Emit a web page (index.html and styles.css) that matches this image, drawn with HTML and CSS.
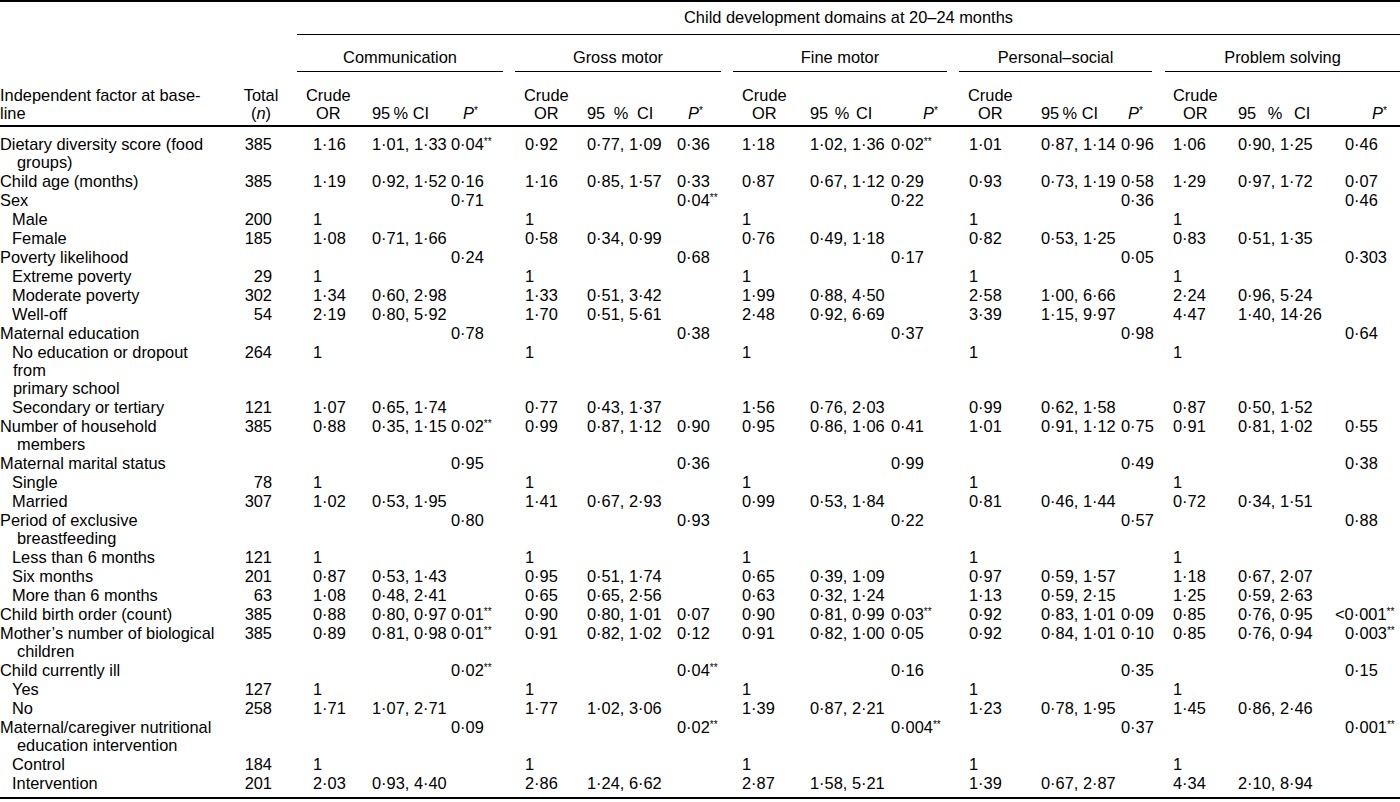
FILE: index.html
```html
<!DOCTYPE html>
<html lang="en">
<head>
<meta charset="utf-8">
<title>Child development domains at 20–24 months</title>
<link rel="stylesheet" href="styles.css">
</head>
<body>
<table class="t">
<colgroup>
<col class="w0"><col class="w1">
<col class="w2"><col class="w3"><col class="w4">
<col class="w5"><col class="w6"><col class="w7">
<col class="w8"><col class="w9"><col class="w10">
<col class="w11"><col class="w12"><col class="w13">
<col class="w14"><col class="w15"><col class="w16">
</colgroup>
<thead>
<tr class="ra">
<th colspan="2"></th>
<th colspan="15" class="top"><div>Child development domains at 20–24 months</div></th>
</tr>
<tr class="rb">
<th colspan="2"></th>
<th colspan="3" class="grp"><div>Communication</div></th>
<th colspan="3" class="grp"><div>Gross motor</div></th>
<th colspan="3" class="grp"><div>Fine motor</div></th>
<th colspan="3" class="grp"><div>Personal–social</div></th>
<th colspan="3" class="grp last"><div>Problem solving</div></th>
</tr>
<tr class="rc">
<th class="hf">Independent factor at base-<br>line</th>
<th class="ht">Total<br>(<i>n</i>)</th>
<th class="hc"><div>Crude<br>OR</div></th><th class="hci">95&#8201;% CI</th><th class="hp hp1"><i>P</i><sup class="s">*</sup></th>
<th class="hc"><div>Crude<br>OR</div></th><th class="hci g2">95 % CI</th><th class="hp hp2"><i>P</i><sup class="s">*</sup></th>
<th class="hc"><div>Crude<br>OR</div></th><th class="hci g3">95 % CI</th><th class="hp hp3"><i>P</i><sup class="s">*</sup></th>
<th class="hc"><div>Crude<br>OR</div></th><th class="hci g4">95&#8201;% CI</th><th class="hp hp4"><i>P</i><sup class="s">*</sup></th>
<th class="hc"><div>Crude<br>OR</div></th><th class="hci g5">95 % CI</th><th class="hp hp5"><i>P</i><sup class="s">*</sup></th>
</tr>
</thead>
<tbody>
<tr class="first"><td class="f">Dietary diversity score (food<br><span class="c">groups)</span></td><td>385</td><td>1·16</td><td>1·01, 1·33</td><td>0·04<sup class="s">**</sup></td><td>0·92</td><td>0·77, 1·09</td><td>0·36</td><td>1·18</td><td>1·02, 1·36</td><td>0·02<sup class="s">**</sup></td><td>1·01</td><td>0·87, 1·14</td><td>0·96</td><td>1·06</td><td>0·90, 1·25</td><td>0·46</td></tr>
<tr><td class="f">Child age (months)</td><td>385</td><td>1·19</td><td>0·92, 1·52</td><td>0·16</td><td>1·16</td><td>0·85, 1·57</td><td>0·33</td><td>0·87</td><td>0·67, 1·12</td><td>0·29</td><td>0·93</td><td>0·73, 1·19</td><td>0·58</td><td>1·29</td><td>0·97, 1·72</td><td>0·07</td></tr>
<tr><td class="f">Sex</td><td></td><td></td><td></td><td>0·71</td><td></td><td></td><td>0·04<sup class="s">**</sup></td><td></td><td></td><td>0·22</td><td></td><td></td><td>0·36</td><td></td><td></td><td>0·46</td></tr>
<tr><td class="f sub">Male</td><td>200</td><td>1</td><td></td><td></td><td>1</td><td></td><td></td><td>1</td><td></td><td></td><td>1</td><td></td><td></td><td>1</td><td></td><td></td></tr>
<tr><td class="f sub">Female</td><td>185</td><td>1·08</td><td>0·71, 1·66</td><td></td><td>0·58</td><td>0·34, 0·99</td><td></td><td>0·76</td><td>0·49, 1·18</td><td></td><td>0·82</td><td>0·53, 1·25</td><td></td><td>0·83</td><td>0·51, 1·35</td><td></td></tr>
<tr><td class="f">Poverty likelihood</td><td></td><td></td><td></td><td>0·24</td><td></td><td></td><td>0·68</td><td></td><td></td><td>0·17</td><td></td><td></td><td>0·05</td><td></td><td></td><td>0·303</td></tr>
<tr><td class="f sub">Extreme poverty</td><td>29</td><td>1</td><td></td><td></td><td>1</td><td></td><td></td><td>1</td><td></td><td></td><td>1</td><td></td><td></td><td>1</td><td></td><td></td></tr>
<tr><td class="f sub">Moderate poverty</td><td>302</td><td>1·34</td><td>0·60, 2·98</td><td></td><td>1·33</td><td>0·51, 3·42</td><td></td><td>1·99</td><td>0·88, 4·50</td><td></td><td>2·58</td><td>1·00, 6·66</td><td></td><td>2·24</td><td>0·96, 5·24</td><td></td></tr>
<tr><td class="f sub">Well-off</td><td>54</td><td>2·19</td><td>0·80, 5·92</td><td></td><td>1·70</td><td>0·51, 5·61</td><td></td><td>2·48</td><td>0·92, 6·69</td><td></td><td>3·39</td><td>1·15, 9·97</td><td></td><td>4·47</td><td>1·40, 14·26</td><td></td></tr>
<tr><td class="f">Maternal education</td><td></td><td></td><td></td><td>0·78</td><td></td><td></td><td>0·38</td><td></td><td></td><td>0·37</td><td></td><td></td><td>0·98</td><td></td><td></td><td>0·64</td></tr>
<tr><td class="f sub">No education or dropout<br><span class="c2">from</span><br><span class="c2">primary school</span></td><td>264</td><td>1</td><td></td><td></td><td>1</td><td></td><td></td><td>1</td><td></td><td></td><td>1</td><td></td><td></td><td>1</td><td></td><td></td></tr>
<tr><td class="f sub">Secondary or tertiary</td><td>121</td><td>1·07</td><td>0·65, 1·74</td><td></td><td>0·77</td><td>0·43, 1·37</td><td></td><td>1·56</td><td>0·76, 2·03</td><td></td><td>0·99</td><td>0·62, 1·58</td><td></td><td>0·87</td><td>0·50, 1·52</td><td></td></tr>
<tr><td class="f">Number of household<br><span class="c">members</span></td><td>385</td><td>0·88</td><td>0·35, 1·15</td><td>0·02<sup class="s">**</sup></td><td>0·99</td><td>0·87, 1·12</td><td>0·90</td><td>0·95</td><td>0·86, 1·06</td><td>0·41</td><td>1·01</td><td>0·91, 1·12</td><td>0·75</td><td>0·91</td><td>0·81, 1·02</td><td>0·55</td></tr>
<tr><td class="f">Maternal marital status</td><td></td><td></td><td></td><td>0·95</td><td></td><td></td><td>0·36</td><td></td><td></td><td>0·99</td><td></td><td></td><td>0·49</td><td></td><td></td><td>0·38</td></tr>
<tr><td class="f sub">Single</td><td>78</td><td>1</td><td></td><td></td><td>1</td><td></td><td></td><td>1</td><td></td><td></td><td>1</td><td></td><td></td><td>1</td><td></td><td></td></tr>
<tr><td class="f sub">Married</td><td>307</td><td>1·02</td><td>0·53, 1·95</td><td></td><td>1·41</td><td>0·67, 2·93</td><td></td><td>0·99</td><td>0·53, 1·84</td><td></td><td>0·81</td><td>0·46, 1·44</td><td></td><td>0·72</td><td>0·34, 1·51</td><td></td></tr>
<tr><td class="f">Period of exclusive<br><span class="c">breastfeeding</span></td><td></td><td></td><td></td><td>0·80</td><td></td><td></td><td>0·93</td><td></td><td></td><td>0·22</td><td></td><td></td><td>0·57</td><td></td><td></td><td>0·88</td></tr>
<tr><td class="f sub">Less than 6 months</td><td>121</td><td>1</td><td></td><td></td><td>1</td><td></td><td></td><td>1</td><td></td><td></td><td>1</td><td></td><td></td><td>1</td><td></td><td></td></tr>
<tr><td class="f sub">Six months</td><td>201</td><td>0·87</td><td>0·53, 1·43</td><td></td><td>0·95</td><td>0·51, 1·74</td><td></td><td>0·65</td><td>0·39, 1·09</td><td></td><td>0·97</td><td>0·59, 1·57</td><td></td><td>1·18</td><td>0·67, 2·07</td><td></td></tr>
<tr><td class="f sub">More than 6 months</td><td>63</td><td>1·08</td><td>0·48, 2·41</td><td></td><td>0·65</td><td>0·65, 2·56</td><td></td><td>0·63</td><td>0·32, 1·24</td><td></td><td>1·13</td><td>0·59, 2·15</td><td></td><td>1·25</td><td>0·59, 2·63</td><td></td></tr>
<tr><td class="f">Child birth order (count)</td><td>385</td><td>0·88</td><td>0·80, 0·97</td><td>0·01<sup class="s">**</sup></td><td>0·90</td><td>0·80, 1·01</td><td>0·07</td><td>0·90</td><td>0·81, 0·99</td><td>0·03<sup class="s">**</sup></td><td>0·92</td><td>0·83, 1·01</td><td>0·09</td><td>0·85</td><td>0·76, 0·95</td><td><span class="lt">&lt;</span>0·001<sup class="s">**</sup></td></tr>
<tr><td class="f">Mother’s number of biological<br><span class="c">children</span></td><td>385</td><td>0·89</td><td>0·81, 0·98</td><td>0·01<sup class="s">**</sup></td><td>0·91</td><td>0·82, 1·02</td><td>0·12</td><td>0·91</td><td>0·82, 1·00</td><td>0·05</td><td>0·92</td><td>0·84, 1·01</td><td>0·10</td><td>0·85</td><td>0·76, 0·94</td><td>0·003<sup class="s">**</sup></td></tr>
<tr><td class="f">Child currently ill</td><td></td><td></td><td></td><td>0·02<sup class="s">**</sup></td><td></td><td></td><td>0·04<sup class="s">**</sup></td><td></td><td></td><td>0·16</td><td></td><td></td><td>0·35</td><td></td><td></td><td>0·15</td></tr>
<tr><td class="f sub">Yes</td><td>127</td><td>1</td><td></td><td></td><td>1</td><td></td><td></td><td>1</td><td></td><td></td><td>1</td><td></td><td></td><td>1</td><td></td><td></td></tr>
<tr><td class="f sub">No</td><td>258</td><td>1·71</td><td>1·07, 2·71</td><td></td><td>1·77</td><td>1·02, 3·06</td><td></td><td>1·39</td><td>0·87, 2·21</td><td></td><td>1·23</td><td>0·78, 1·95</td><td></td><td>1·45</td><td>0·86, 2·46</td><td></td></tr>
<tr><td class="f">Maternal/caregiver nutritional<br><span class="c">education intervention</span></td><td></td><td></td><td></td><td>0·09</td><td></td><td></td><td>0·02<sup class="s">**</sup></td><td></td><td></td><td>0·004<sup class="s">**</sup></td><td></td><td></td><td>0·37</td><td></td><td></td><td>0·001<sup class="s">**</sup></td></tr>
<tr><td class="f sub">Control</td><td>184</td><td>1</td><td></td><td></td><td>1</td><td></td><td></td><td>1</td><td></td><td></td><td>1</td><td></td><td></td><td>1</td><td></td><td></td></tr>
<tr class="last"><td class="f sub">Intervention</td><td>201</td><td>2·03</td><td>0·93, 4·40</td><td></td><td>2·86</td><td>1·24, 6·62</td><td></td><td>2·87</td><td>1·58, 5·21</td><td></td><td>1·39</td><td>0·67, 2·87</td><td></td><td>4·34</td><td>2·10, 8·94</td><td></td></tr>
</tbody>
</table>
</body>
</html>
```

FILE: styles.css
```css
html, body {
  margin: 0;
  padding: 0;
  background: #fff;
}

body {
  font-family: "Liberation Sans", Arial, sans-serif;
  font-size: 16.4px;
  line-height: 18px;
  color: #000;
}

.t {
  width: 1400px;
  table-layout: fixed;
  border-collapse: separate;
  border-spacing: 0;
  border-top: 2px solid #000;
  border-bottom: 2px solid #000;
}

.w0 { width: 237px; }
.w1 { width: 54px; }
.w2 { width: 75px; }
.w3 { width: 78px; }
.w4 { width: 65px; }
.w5 { width: 72px; }
.w6 { width: 90px; }
.w7 { width: 56px; }
.w8 { width: 77px; }
.w9 { width: 78px; }
.w10 { width: 71px; }
.w11 { width: 84px; }
.w12 { width: 75px; }
.w13 { width: 46px; }
.w14 { width: 74px; }
.w15 { width: 107px; }
.w16 { width: 61px; }

.t th, .t td {
  padding: 0;
  font-weight: normal;
  white-space: nowrap;
  text-align: left;
}

/* Header row A */
.ra th { padding-top: 6px; vertical-align: top; }
.top div {
  margin-left: 6px;
  padding-bottom: 8px;
  border-bottom: 1px solid #000;
  text-align: center;
}

/* Header row B */
.rb th { padding-top: 13px; vertical-align: top; }
.grp div {
  margin: 0 6px;
  padding-bottom: 5px;
  border-bottom: 1px solid #000;
  text-align: center;
}
.grp.last div { margin-right: 0; margin-left: 7px; }

/* Header row C */
.rc th {
  padding-top: 14px;
  padding-bottom: 3px;
  vertical-align: bottom;
  border-bottom: 2px solid #000;
}
.rc .ht { text-align: center; padding-right: 6px; }
.rc .hc { padding-left: 15px; }
.hc div { display: inline-block; text-align: center; }
.rc .hci { padding-left: 6px; }
.rc .hci.g4 { padding-left: 4px; }
.hci.g2 { word-spacing: 4px; }
.hci.g3 { word-spacing: 2px; }
.hci.g5 { word-spacing: 7px; }
.rc .hp1 { padding-left: 19px; }
.rc .hp2 { padding-left: 17px; }
.rc .hp3 { padding-left: 41px; }
.rc .hp4 { padding-left: 16px; }
.rc .hp5 { padding-left: 33px; }

.s {
  font-size: 10px;
  line-height: 0;
  vertical-align: 5px;
}

/* Body */
.t td { vertical-align: top; padding-top: 1px; }
.t tr.first td { padding-top: 8px; }
.t tr.last td { padding-bottom: 5px; }

.t td:nth-child(2) { text-align: right; padding-right: 19px; }
.t td:nth-child(3) { padding-left: 22px; }
.t td:nth-child(4),
.t td:nth-child(7), .t td:nth-child(8),
.t td:nth-child(10),
.t td:nth-child(16), .t td:nth-child(17) { padding-left: 6px; }
.t td:nth-child(5) { padding-left: 7px; }
.t td:nth-child(11) { padding-left: 9px; }
.t td:nth-child(13) { padding-left: 4px; }
.t td:nth-child(14) { padding-left: 9px; }
.t td:nth-child(6) { padding-left: 16px; }
.t td:nth-child(9) { padding-left: 15px; }
.t td:nth-child(12) { padding-left: 16px; }
.t td:nth-child(15) { padding-left: 15px; }

.t td.f { padding-left: 0; }
.t td.f.sub { padding-left: 12px; }
.c { padding-left: 17px; }
.c2 { padding-left: 1px; }

.lt { margin-left: -10px; }
```
